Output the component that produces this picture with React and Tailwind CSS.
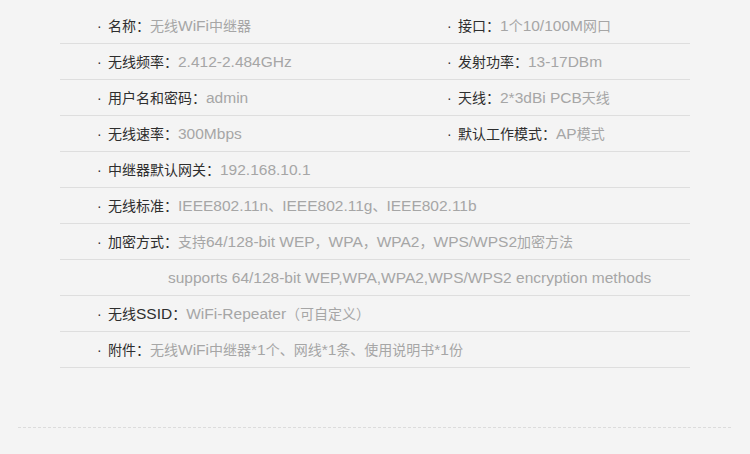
import React from "react";

const rows = [
  [["名称", "无线WiFi中继器"], ["接口", "1个10/100M网口"]],
  [["无线频率", "2.412-2.484GHz"], ["发射功率", "13-17DBm"]],
  [["用户名和密码", "admin"], ["天线", "2*3dBi PCB天线"]],
  [["无线速率", "300Mbps"], ["默认工作模式", "AP模式"]],
  [["中继器默认网关", "192.168.10.1"]],
  [["无线标准", "IEEE802.11n、IEEE802.11g、IEEE802.11b"]],
  [["加密方式", "支持64/128-bit WEP，WPA，WPA2，WPS/WPS2加密方法"]],
  "supports 64/128-bit WEP,WPA,WPA2,WPS/WPS2 encryption methods",
  [["无线SSID", "WiFi-Repeater（可自定义）"]],
  [["附件", "无线WiFi中继器*1个、网线*1条、使用说明书*1份"]],
];

function Mixed({ text }) {
  const parts = text.split(/([\u3000-\u9fff\uff00-\uffef]+)/).filter(Boolean);
  return parts.map((p, i) =>
    /[\u3000-\u9fff\uff00-\uffef]/.test(p) ? (
      <span key={i} className="text-[14px]">{p}</span>
    ) : (
      <span key={i} className="text-[15.5px]">{p}</span>
    )
  );
}

function Item({ label, value, fixed }) {
  return (
    <div className={fixed ? "flex w-[350px] shrink-0 items-baseline whitespace-nowrap" : "flex items-baseline whitespace-nowrap"}>
      <span className="w-[11px] text-[#333]">·</span>
      <span className="text-[#2e2e2e]"><Mixed text={label} />：</span>
      <span className="text-[#a6a6a6]"><Mixed text={value} /></span>
    </div>
  );
}

export default function App() {
  return (
    <div
      className="w-[750px] h-[454px] bg-[#f4f4f4] pt-[8px] text-[14px]"
      style={{ fontFamily: '"Liberation Sans", "Noto Sans CJK SC", sans-serif' }}
    >
      <div className="ml-[60px] w-[630px]">
        {rows.map((r, i) =>
          typeof r === "string" ? (
            <div key={i} className="flex h-[36px] items-center border-b border-[#dedede] pl-[108px] text-[15.5px] text-[#a6a6a6] whitespace-nowrap">
              {r}
            </div>
          ) : (
            <div key={i} className="flex h-[36px] items-center border-b border-[#dedede] pl-[37px]">
              <Item label={r[0][0]} value={r[0][1]} fixed={r.length === 2} />
              {r[1] && <Item label={r[1][0]} value={r[1][1]} />}
            </div>
          )
        )}
      </div>
      <div className="mx-[18px] mt-[59px] h-px bg-[repeating-linear-gradient(to_right,#dcdcdc_0_3px,transparent_3px_5px)]" />
    </div>
  );
}
